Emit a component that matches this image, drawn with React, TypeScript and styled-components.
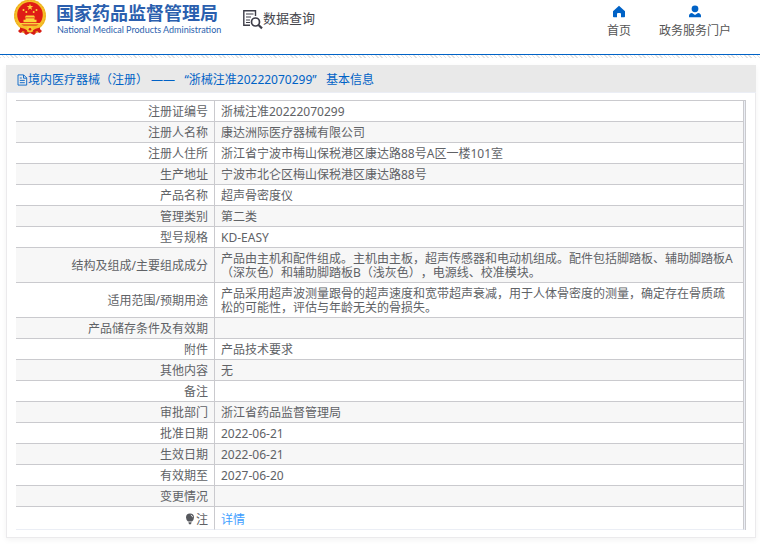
import React from "react";
import styled, { createGlobalStyle } from "styled-components";

const GlobalStyle = createGlobalStyle`
  * { box-sizing: border-box; }
  body {
    margin: 0;
    background: #fff;
    color: #606266;
    font: 12px/14px "Noto Sans", "Noto Sans CJK SC", sans-serif;
    text-spacing-trim: space-all;
  }
`;

const Header = styled.header`
  display: flex;
  align-items: flex-start;
  height: 55px;
  padding: 0 29px 0 13px;
  border-bottom: 1px solid #0062c6;
`;

const Brand = styled.a`
  display: flex;
  gap: 9px;
  width: 205px;
  color: #2b5fae;
  text-decoration: none;
  white-space: nowrap;

  svg { flex: none; }
`;

const BrandText = styled.span`
  display: flex;
  flex-direction: column;
  padding-top: 1px;
`;

const BrandName = styled.strong`
  font: bold 18px/22px "Noto Sans CJK SC", sans-serif;
`;

const BrandSub = styled.span`
  padding-left: 1px;
  font: 400 9px/14px Lato, sans-serif;
`;

const Query = styled.a`
  display: flex;
  margin: 8px auto 0 25px;
  color: #44454c;
  font: 400 13px/20px "Noto Sans CJK SC", sans-serif;
  text-decoration: none;
`;

const Nav = styled.nav`
  display: flex;
  gap: 28px;
  padding-top: 5px;
`;

const NavLink = styled.a`
  display: flex;
  flex-direction: column;
  align-items: center;
  gap: 4px;
  color: #555;
  line-height: 16px;
  text-decoration: none;
`;

const Hatch = styled.div`
  height: 3px;
  background: repeating-linear-gradient(45deg, #e2e2e2 0 1px, #fff 1px 3px);
`;

const Card = styled.main`
  margin: 7px 4px 8px 6px;
  border: 1px solid #ebeaec;
  border-top: 0;
  box-shadow: 0 2px 6px rgba(0, 0, 0, 0.05);
`;

const Title = styled.h1`
  display: flex;
  align-items: center;
  height: 28px;
  margin: 0 -1px;
  padding: 2px 0 0 11px;
  border-bottom: 1px solid #ebeef5;
  background: #e9e9e9;
  color: #0062c6;
  font-size: 12px;
  font-weight: 400;
  white-space: pre;
`;

const TableFrame = styled.div`
  margin: 7px 9px;
  padding-right: 1px;
  border-top: 1px solid #cacace;
  border-right: 1px solid #cacace;
  background: #ebeef5;
`;

const Table = styled.table`
  width: 100%;
  border-collapse: separate;
  border-spacing: 0;
  table-layout: fixed;
  background: #fff;
`;

const Row = styled.tr`
  &:nth-child(even) { background: #f7f7f7; }
  &:last-child > * {
    height: 23px;
    padding-top: 6px;
    border-bottom-color: #ebeef5;
  }
`;

const Label = styled.th`
  width: 199px;
  height: 21px;
  padding: 4px 6px 2px;
  border: solid #cacace;
  border-width: 0 1px 1px 0;
  font-weight: 400;
  text-align: right;
`;

const Value = styled.td`
  padding: 4px 8px 2px 6px;
  border: solid #cacace;
  border-width: 0 1px 1px 0;
`;

const DetailLink = styled.a`
  color: #409eff;
  text-decoration: none;
`;

const Bulb = styled.svg`
  vertical-align: -1px;
  margin-right: 1px;
`;

const Emblem = () => (
  <svg width="34" height="35" viewBox="0 0 34 35" aria-hidden="true">
    <path d="M8 28 5 31l2 2 3-1 3 3 4-2 4 2 3-3 3 1 2-2-3-3z" fill="#d71d14" />
    <circle cx="17" cy="15.5" r="16" fill="#f5bf28" />
    <circle cx="17" cy="15.5" r="15.2" fill="none" stroke="#e9a820" strokeWidth="1" strokeDasharray="2 1.4" />
    <circle cx="17" cy="14.8" r="12.8" fill="#df1c16" />
    <path d="m17 3.8.8 2.3h2.5l-2 1.5.8 2.3-2.1-1.4-2.1 1.4.8-2.3-2-1.5h2.5z" fill="#fbd43a" />
    <g fill="#fbd43a">
      <circle cx="10.5" cy="10" r="1" />
      <circle cx="13.3" cy="12" r="1" />
      <circle cx="20.7" cy="12" r="1" />
      <circle cx="23.5" cy="10" r="1" />
      <path d="M13 15.5h8l1.2 2H11.8zM12.5 18.2h9v1.6h2v2.4h-13v-2.4h2zM7 23h20v1.6H7z" />
    </g>
    <path d="M5.5 25.6h23l-3.4 3.2H9z" fill="#f5bf28" />
    <path d="M7 27.5q5 1 7.5 3L11 33l-4-2zM27 27.5q-5 1-7.5 3L23 33l4-2z" fill="#d71d14" />
    <circle cx="17" cy="29.3" r="3.2" fill="#f8ca30" />
    <circle cx="17" cy="29.3" r="1.3" fill="#df1c16" />
    <path d="m9 31 3 1-2 1zm16 0-3 1 2 1z" fill="#f8ca30" />
  </svg>
);

const QueryIcon = () => (
  <svg width="20" height="22" viewBox="0 0 20 22" fill="none" stroke="#3d3d48" aria-hidden="true">
    <path d="M7 17.2H.8V2.8h11.7V8" strokeWidth="1.4" />
    <path d="M3 6h7.5M3 9h5M3 12h4M3 14.5h4" strokeWidth="1" />
    <circle cx="12.5" cy="14" r="4" strokeWidth="1.7" />
    <path d="m15.5 17 3.5 3.4" strokeWidth="2.2" />
  </svg>
);

const HomeIcon = () => (
  <svg width="14" height="14" viewBox="0 0 14 14" fill="#0062c6" aria-hidden="true">
    <path d="M7 .8 13 6.3v5.2q0 .8-.8.8H9V9q0-1-1-1H6Q5 8 5 9v3.3H1.8q-.8 0-.8-.8V6.3z" />
  </svg>
);

const UserIcon = () => (
  <svg width="14" height="14" viewBox="0 0 14 14" fill="#0062c6" aria-hidden="true">
    <circle cx="7" cy="3.8" r="3.4" />
    <path d="M1 12.3v-1.5q0-2.5 3-2.9l3 2 3-2q3 .4 3 2.9v1.5z" />
  </svg>
);

const DocIcon = () => (
  <svg width="11" height="12" viewBox="0 0 11 12" fill="none" stroke="#0062c6" strokeWidth="0.9" aria-hidden="true">
    <path d="M1 .9h5.7l3 3v7.2H1zM6.5 1v3.2h3M2.8 4h2M2.8 6.4h5M2.8 8.7h5" />
  </svg>
);

const BulbIcon = () => (
  <Bulb width="10" height="12" viewBox="0 0 10 12" aria-hidden="true">
    <path d="M5 .6a4 4 0 0 1 4 4q0 2-2 4H3q-2-2-2-4a4 4 0 0 1 4-4zM3.4 9.2h3.2L6 11.2H4z" fill="#56585d" />
    <path d="M5.8 2q1.6.5 1.8 2.2" fill="none" stroke="#fff" strokeWidth="0.8" />
  </Bulb>
);

const rows: [string, string][] = [
  ["注册证编号", "浙械注准20222070299"],
  ["注册人名称", "康达洲际医疗器械有限公司"],
  ["注册人住所", "浙江省宁波市梅山保税港区康达路88号A区一楼101室"],
  ["生产地址", "宁波市北仑区梅山保税港区康达路88号"],
  ["产品名称", "超声骨密度仪"],
  ["管理类别", "第二类"],
  ["型号规格", "KD-EASY"],
  ["结构及组成/主要组成成分", "产品由主机和配件组成。主机由主板，超声传感器和电动机组成。配件包括脚踏板、辅助脚踏板A（深灰色）和辅助脚踏板B（浅灰色），电源线、校准模块。"],
  ["适用范围/预期用途", "产品采用超声波测量跟骨的超声速度和宽带超声衰减，用于人体骨密度的测量，确定存在骨质疏松的可能性，评估与年龄无关的骨损失。"],
  ["产品储存条件及有效期", ""],
  ["附件", "产品技术要求"],
  ["其他内容", "无"],
  ["备注", ""],
  ["审批部门", "浙江省药品监督管理局"],
  ["批准日期", "2022-06-21"],
  ["生效日期", "2022-06-21"],
  ["有效期至", "2027-06-20"],
  ["变更情况", ""],
];

export default function App() {
  return (
    <>
      <GlobalStyle />
      <Header>
        <Brand href="#">
          <Emblem />
          <BrandText>
            <BrandName lang="zh-CN">国家药品监督管理局</BrandName>
            <BrandSub>National Medical Products Administration</BrandSub>
          </BrandText>
        </Brand>
        <Query href="#query">
          <QueryIcon />
          数据查询
        </Query>
        <Nav>
          <NavLink href="#home">
            <HomeIcon />
            首页
          </NavLink>
          <NavLink href="#portal">
            <UserIcon />
            政务服务门户
          </NavLink>
        </Nav>
      </Header>
      <Hatch />
      <Card lang="zh-CN">
        <Title>
          <DocIcon />
          {"境内医疗器械（注册） ——   “浙械注准20222070299”   基本信息"}
        </Title>
        <TableFrame>
          <Table>
            <tbody>
              {rows.map(([label, value]) => (
                <Row key={label}>
                  <Label scope="row">{label}</Label>
                  <Value>{value}</Value>
                </Row>
              ))}
              <Row>
                <Label scope="row">
                  <BulbIcon />注
                </Label>
                <Value>
                  <DetailLink href="#detail">详情</DetailLink>
                </Value>
              </Row>
            </tbody>
          </Table>
        </TableFrame>
      </Card>
    </>
  );
}
